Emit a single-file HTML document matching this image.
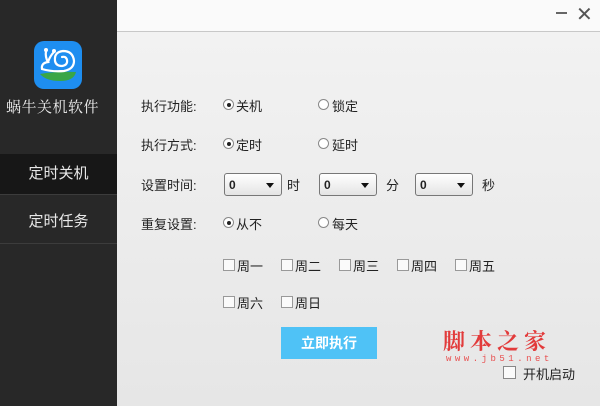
<!DOCTYPE html>
<html><head><meta charset="utf-8"><style>
*{margin:0;padding:0;box-sizing:border-box}
body{width:600px;height:406px;overflow:hidden;position:relative;background:#ebebeb;font-family:"Liberation Sans","Noto Sans CJK SC",sans-serif;font-size:13px;color:#222}
.side{position:absolute;left:0;top:0;width:117px;height:406px;background:#282828}
.main{position:absolute;left:117px;top:0;width:483px;height:406px;background:linear-gradient(#f3f3f3,#e6e6e6)}
.title{position:absolute;left:117px;top:0;width:483px;height:32px;background:#fafafa;border-bottom:1px solid #c8c8c8}
.a{position:absolute;white-space:nowrap}
.nav{position:absolute;left:0;width:117px;height:40px;line-height:40px;text-align:center;color:#e8e8e8;font-size:15px}
.r{position:absolute;width:11px;height:11px;border:1px solid #888;border-radius:50%;background:#fff}
.r.on::after{content:"";position:absolute;left:2.5px;top:2.5px;width:4px;height:4px;border-radius:50%;background:#222}
.c{position:absolute;width:12px;height:12px;border:1px solid #999;background:#fafafa}
.sel{position:absolute;width:58px;height:23px;border:1px solid #777;border-radius:3px;background:linear-gradient(#fff,#e4e4e4);font-weight:bold;font-size:12px;padding:4px 0 0 4px}
.sel::after{content:"";position:absolute;right:7px;top:9px;border:4px solid transparent;border-top:5px solid #111}
</style></head><body>
<div class="side">
<svg style="position:absolute;left:34px;top:41px" width="48" height="48" viewBox="0 0 48 48">
<rect width="48" height="48" rx="10" fill="#1e8ef0"/>
<path d="M6 33 Q22 30 42 31 Q40 40 26 40 Q12 40 6 33Z" fill="#39a646"/>
<g fill="none" stroke="#fff" stroke-width="2.2" stroke-linecap="round">
<path d="M8 28 Q18 31 30 30 Q40 28 40 20 Q39 10 29 10 Q20 11 21 20 Q22 25 28 25 Q34 24 33 19 Q32 15 28 16"/>
<path d="M8 28 Q7 22 14 21 Q11 16 12 10"/><path d="M14 21 Q16 15 20 11"/>
</g><circle cx="12" cy="9" r="2" fill="#fff"/><circle cx="20" cy="10" r="2" fill="#fff"/></svg>
<div class="a" style="left:6px;top:96px;color:#eee;font-size:15px;letter-spacing:0.5px;font-family:'Noto Serif CJK SC',serif">蜗牛关机软件</div>
<div class="nav" style="top:154px;background:#171717">定时关机</div>
<div style="position:absolute;left:0;top:194px;width:117px;height:1px;background:#3c3c3c"></div>
<div class="nav" style="top:202px">定时任务</div>
<div style="position:absolute;left:0;top:243px;width:117px;height:1px;background:#3c3c3c"></div>
</div>
<div class="main"></div>
<div class="title"></div>
<div class="a" style="left:556px;top:12px;width:11px;height:1.5px;background:#666"></div>
<div class="a" style="left:576px;top:2px;font-size:20px;color:#555">✕</div>

<div class="a" style="left:141px;top:96px">执行功能:</div>
<div class="r on" style="left:223px;top:99px"></div><div class="a" style="left:236px;top:96px">关机</div>
<div class="r" style="left:318px;top:99px"></div><div class="a" style="left:332px;top:96px">锁定</div>
<div class="a" style="left:141px;top:135px">执行方式:</div>
<div class="r on" style="left:223px;top:138px"></div><div class="a" style="left:236px;top:135px">定时</div>
<div class="r" style="left:318px;top:138px"></div><div class="a" style="left:332px;top:135px">延时</div>
<div class="a" style="left:141px;top:175px">设置时间:</div>
<div class="sel" style="left:224px;top:173px">0</div><div class="a" style="left:287px;top:175px">时</div>
<div class="sel" style="left:319px;top:173px">0</div><div class="a" style="left:386px;top:175px">分</div>
<div class="sel" style="left:415px;top:173px">0</div><div class="a" style="left:482px;top:175px">秒</div>
<div class="a" style="left:141px;top:214px">重复设置:</div>
<div class="r on" style="left:223px;top:217px"></div><div class="a" style="left:236px;top:214px">从不</div>
<div class="r" style="left:318px;top:217px"></div><div class="a" style="left:332px;top:214px">每天</div>

<div class="c" style="left:223px;top:259px"></div><div class="a" style="left:237px;top:256px">周一</div>
<div class="c" style="left:281px;top:259px"></div><div class="a" style="left:295px;top:256px">周二</div>
<div class="c" style="left:339px;top:259px"></div><div class="a" style="left:353px;top:256px">周三</div>
<div class="c" style="left:397px;top:259px"></div><div class="a" style="left:411px;top:256px">周四</div>
<div class="c" style="left:455px;top:259px"></div><div class="a" style="left:469px;top:256px">周五</div>
<div class="c" style="left:223px;top:296px"></div><div class="a" style="left:237px;top:293px">周六</div>
<div class="c" style="left:281px;top:296px"></div><div class="a" style="left:295px;top:293px">周日</div>

<div class="a" style="left:281px;top:327px;width:96px;height:32px;background:#4fc2f6;color:#fff;font-weight:bold;font-size:14px;text-align:center;line-height:32px">立即执行</div>

<div class="a" style="left:443px;top:325px;color:#e23b3b;font-size:22px;font-weight:bold;letter-spacing:5px;font-family:'Noto Serif CJK SC',serif">脚本之家</div>
<div class="a" style="left:446px;top:354px;color:#e85050;font-size:9px;letter-spacing:3.5px;font-family:'Liberation Mono',monospace">www.jb51.net</div>
<div class="c" style="left:503px;top:366px;width:13px;height:13px;border-color:#888"></div>
<div class="a" style="left:523px;top:364px">开机启动</div>
</body></html>
